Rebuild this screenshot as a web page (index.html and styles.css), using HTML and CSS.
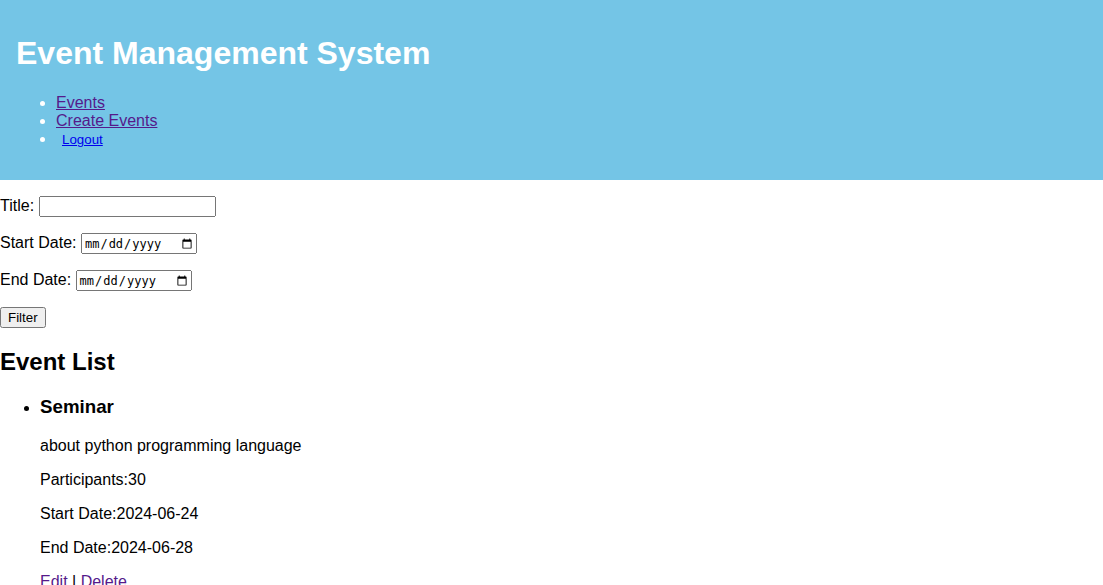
FILE: index.html
```html
<!DOCTYPE html>
<html lang="en">
<head>
<meta charset="utf-8">
<title>Event Management System</title>
<link rel="stylesheet" href="styles.css">
</head>
<body>
<header class="site-header">
  <h1 class="site-title">Event Management System</h1>
  <ul class="site-nav">
    <li><a class="visited" href="#events">Events</a></li>
    <li><a class="visited" href="#create">Create Events</a></li>
    <li><form class="logout-form"><button class="logout" type="button">Logout</button></form></li>
  </ul>
</header>
<main>
  <form class="filter">
    <p><label for="title">Title:</label> <input class="field field-text" id="title" type="text"></p>
    <p><label for="start">Start Date:</label> <input class="field field-date" id="start" type="date"></p>
    <p><label for="end">End Date:</label> <input class="field field-date" id="end" type="date"></p>
    <button type="button">Filter</button>
  </form>
  <h2 class="list-title">Event List</h2>
  <ul class="event-list">
    <li>
      <h3>Seminar</h3>
      <p>about python programming language</p>
      <p>Participants:30</p>
      <p>Start Date:2024-06-24</p>
      <p>End Date:2024-06-28</p>
      <a class="visited" href="#edit">Edit</a> | <a class="visited" href="#delete">Delete</a>
    </li>
  </ul>
</main>
</body>
</html>
```
FILE: styles.css
```css
html {
  overflow: hidden;
}

body {
  margin: 0;
  font-family: "Liberation Sans", Arial, sans-serif;
}

.site-header {
  padding: 16px;
  background: #74c5e6;
  color: #fff;
}

.site-title {
  margin: 19px 0 22px;
}

.visited {
  color: #551a8b;
}

.logout-form {
  display: inline;
}

.logout {
  padding: 1px 6px;
  border: 0;
  background: none;
  color: #00e;
  text-decoration: underline;
  cursor: pointer;
}

.field {
  box-sizing: border-box;
  height: 21px;
}

.field-text {
  width: 177px;
}

.field-date {
  width: 116px;
  font-family: "DejaVu Sans Mono", monospace;
  font-size: 12px;
}
```
